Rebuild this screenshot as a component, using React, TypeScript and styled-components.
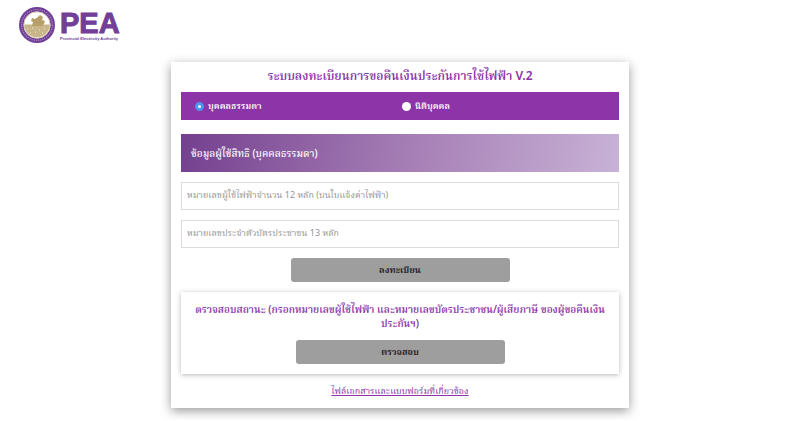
import React, { useState } from "react";
import styled, { createGlobalStyle } from "styled-components";

const GlobalStyle = createGlobalStyle`
  *, *::before, *::after { box-sizing: border-box; }
  body {
    margin: 0;
    background: #fff;
    color: #222;
    font-family: "Noto Sans", "Noto Serif Thai", "Noto Sans Thai Looped", sans-serif;
    font-size: 9px;
    line-height: 14px;
  }
`;

const Header = styled.header`
  display: flex;
  align-items: center;
  padding: 6px 18px 0;
`;

const Brand = styled.a`
  display: flex;
  align-items: center;
  gap: 4px;
  color: #713f97;
  text-decoration: none;
`;

const Seal = styled.svg`
  width: 38px;
  height: 38px;
  flex: none;
`;

const BrandText = styled.span`
  display: flex;
  flex-direction: column;
  font-family: "Liberation Sans", Arial, sans-serif;
  font-weight: 700;
`;

const BrandName = styled.span`
  font-size: 29px;
  line-height: 26px;
  -webkit-text-stroke: 1px currentColor;
`;

const BrandCaption = styled.span`
  font-size: 4px;
  line-height: 5px;
  white-space: nowrap;
`;

const Card = styled.main`
  width: calc(100% - 32px);
  max-width: 458px;
  margin: 18px auto 12px;
  padding: 6px 10px 10px;
  display: flex;
  flex-direction: column;
  gap: 10px;
  background: #fff;
  box-shadow: 0 3px 10px rgba(0, 0, 0, 0.4);
`;

const Title = styled.h1`
  margin: 0 0 -2px;
  color: #8c34a8;
  font-size: 12px;
  font-weight: 600;
  line-height: 16px;
  text-align: center;
`;

const TypeBar = styled.fieldset`
  margin: 0 0 4px;
  padding: 7px 10px 7px 14px;
  border: 0;
  display: grid;
  grid-template-columns: 1fr 1fr;
  background: #8c34a8;
`;

const TypeOption = styled.label`
  display: flex;
  align-items: center;
  gap: 4px;
  color: #fff;
  font-weight: 600;
`;

const Radio = styled.input`
  appearance: none;
  flex: none;
  width: 9px;
  height: 9px;
  margin: 0;
  border-radius: 50%;
  background: #fff;

  &:checked {
    border: 3px solid #4a95ee;
  }
`;

const SectionTitle = styled.h2`
  margin: 0;
  padding: 12px 10px;
  background: linear-gradient(100deg, #74408f, #a47cb4 50%, #c8b2d6);
  color: #fff;
  font-size: 10px;
  font-weight: 500;
  line-height: 14px;
`;

const Field = styled.input`
  width: 100%;
  height: 28px;
  padding: 0 5px 4px;
  border: 1px solid #dcdcdc;
  background: #fff;
  color: #333;
  font: inherit;

  &::placeholder { color: #949494; opacity: 1; }
`;

const Button = styled.button`
  align-self: center;
  width: 50%;
  height: 24px;
  padding: 0;
  border: 0;
  border-radius: 3px;
  background: #9e9e9e;
  color: #262326;
  font: inherit;
  font-weight: 700;
`;

const StatusBox = styled.section`
  padding: 10px;
  display: flex;
  flex-direction: column;
  gap: 10px;
  background: #fff;
  box-shadow: 0 1px 5px rgba(0, 0, 0, 0.28);
`;

const StatusTitle = styled.h2`
  margin: 0;
  color: #8c34a8;
  font-size: 10px;
  font-weight: 600;
  line-height: 14px;
  text-align: center;
`;

const KeepTogether = styled.span`
  white-space: nowrap;
`;

const DocumentLink = styled.a`
  align-self: center;
  color: #8c34a8;
  text-decoration: underline;
`;

const types = ["บุคคลธรรมดา", "นิติบุคคล"];

export default function App() {
  const [type, setType] = useState(types[0]);
  return (
    <>
      <GlobalStyle />
      <Header>
        <Brand href="#" aria-label="PEA Provincial Electricity Authority">
          <Seal viewBox="0 0 38 38" aria-hidden="true">
            <circle cx="19" cy="19" r="18" fill="#713f97" />
            <circle cx="19" cy="19" r="15.4" fill="none" stroke="#a88bbf" strokeWidth="1.4" strokeDasharray="1 1.2" />
            <circle cx="19" cy="19" r="13.2" fill="#fff" stroke="#d9cdb0" strokeWidth="1" />
            <path d="M6.3 18.5h25.4a12.7 12.7 0 0 1-25.4 0z" fill="#c8b58a" />
            <path d="M14 20l1-4-2-1 1-3 3 1 3-2 2-2 3 2-1 3 3 1-1 3-2 2z" fill="#b79f69" />
            <path d="M9 23h1m4-1h1m6 2h1m4-2h1M12 27h1m4-1h1m6 1h1" stroke="#f0e7d1" />
          </Seal>
          <BrandText>
            <BrandName>PEA</BrandName>
            <BrandCaption>Provincial Electricity Authority</BrandCaption>
          </BrandText>
        </Brand>
      </Header>
      <Card>
        <Title>ระบบลงทะเบียนการขอคืนเงินประกันการใช้ไฟฟ้า V.2</Title>
        <TypeBar aria-label="ประเภทผู้ใช้ไฟฟ้า">
          {types.map((name) => (
            <TypeOption key={name}>
              <Radio type="radio" name="type" checked={type === name} onChange={() => setType(name)} />
              {name}
            </TypeOption>
          ))}
        </TypeBar>
        <SectionTitle>ข้อมูลผู้ใช้สิทธิ ({type})</SectionTitle>
        <Field aria-label="หมายเลขผู้ใช้ไฟฟ้า" placeholder="หมายเลขผู้ใช้ไฟฟ้าจำนวน 12 หลัก (บนใบแจ้งค่าไฟฟ้า)" />
        <Field aria-label="หมายเลขประจำตัวบัตรประชาชน" placeholder="หมายเลขประจำตัวบัตรประชาชน 13 หลัก" />
        <Button type="button">ลงทะเบียน</Button>
        <StatusBox>
          <StatusTitle>
            ตรวจสอบสถานะ (กรอกหมายเลขผู้ใช้ไฟฟ้า และหมายเลขบัตรประชาชน/ผู้เสียภาษี ของผู้ขอคืนเงิน<wbr />
            <KeepTogether>ประกันฯ)</KeepTogether>
          </StatusTitle>
          <Button type="button">ตรวจสอบ</Button>
        </StatusBox>
        <DocumentLink href="#">ไฟล์เอกสารและแบบฟอร์มที่เกี่ยวข้อง</DocumentLink>
      </Card>
    </>
  );
}
